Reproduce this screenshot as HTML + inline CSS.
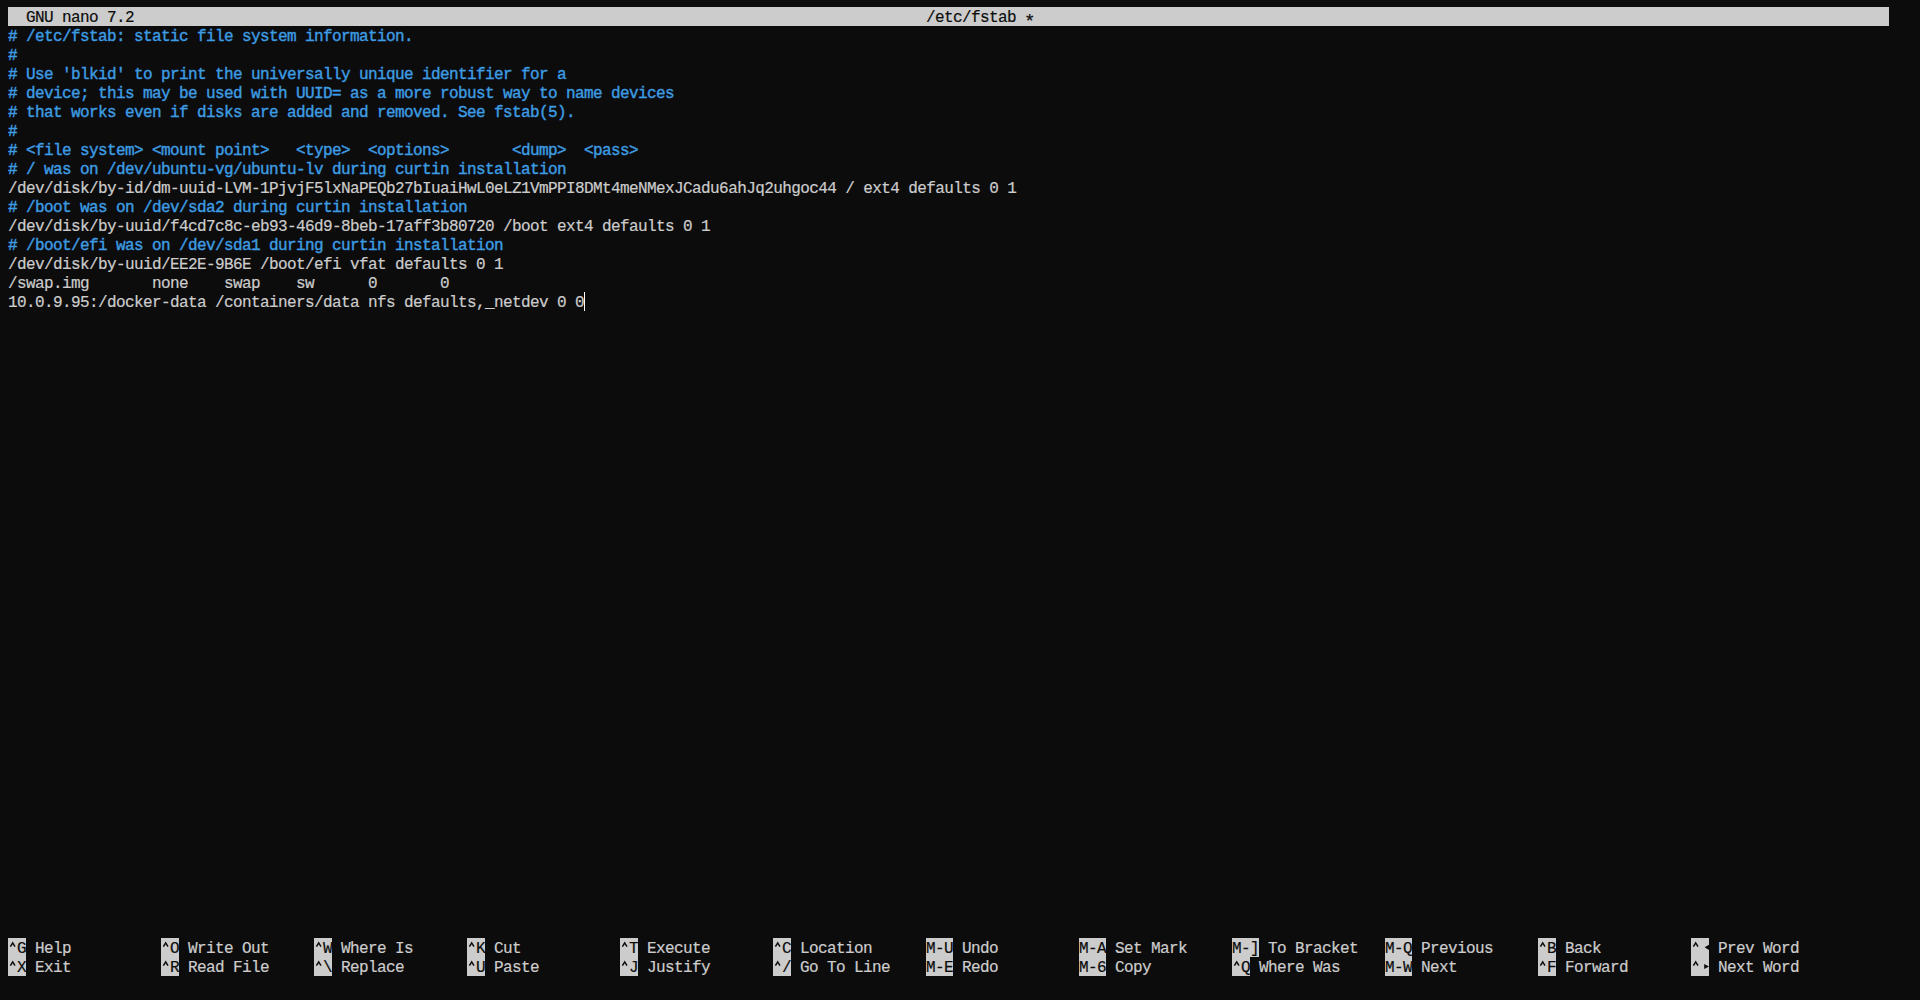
<!DOCTYPE html>
<html><head><meta charset="utf-8">
<style>
html,body{margin:0;padding:0;background:#0c0c0c;width:1920px;height:1000px;overflow:hidden;}
body{position:relative;font-family:"Liberation Mono",monospace;font-size:16px;letter-spacing:-0.6px;color:#cccccc;-webkit-text-stroke:0.2px currentColor;}
.r{position:absolute;left:8px;height:19px;line-height:19px;white-space:pre;padding-top:2px;}
.t{top:0}
.c{color:#3d9ce2;-webkit-text-stroke:0.4px currentColor;}
.bar{position:absolute;left:8px;top:7px;width:1881px;height:19px;background:#cccccc;}
.kb{position:absolute;background:#cccccc;height:19px;}
.kk{color:#0c0c0c;}
.k3{width:27px;}
.ks{position:absolute;white-space:pre;line-height:19px;height:19px;padding-top:2px;}
.cur{position:absolute;left:584px;top:292px;width:1px;height:19px;background:#ffffff;}
</style></head><body>
<div class="bar"></div>
<div class="r" style="top:7px;color:#0c0c0c">  GNU nano 7.2</div>
<div class="r" style="top:7px;left:926px;color:#0c0c0c">/etc/fstab</div>
<div class="r" style="top:11px;left:1024px;color:#0c0c0c;font-size:19px;line-height:19px">*</div>
<div class="r c" style="top:26px"># /etc/fstab: static file system information.</div>
<div class="r c" style="top:45px">#</div>
<div class="r c" style="top:64px"># Use 'blkid' to print the universally unique identifier for a</div>
<div class="r c" style="top:83px"># device; this may be used with UUID= as a more robust way to name devices</div>
<div class="r c" style="top:102px"># that works even if disks are added and removed. See fstab(5).</div>
<div class="r c" style="top:121px">#</div>
<div class="r c" style="top:140px"># &lt;file system&gt; &lt;mount point&gt;   &lt;type&gt;  &lt;options&gt;       &lt;dump&gt;  &lt;pass&gt;</div>
<div class="r c" style="top:159px"># / was on /dev/ubuntu-vg/ubuntu-lv during curtin installation</div>
<div class="r" style="top:178px">/dev/disk/by-id/dm-uuid-LVM-1PjvjF5lxNaPEQb27bIuaiHwL0eLZ1VmPPI8DMt4meNMexJCadu6ahJq2uhgoc44 / ext4 defaults 0 1</div>
<div class="r c" style="top:197px"># /boot was on /dev/sda2 during curtin installation</div>
<div class="r" style="top:216px">/dev/disk/by-uuid/f4cd7c8c-eb93-46d9-8beb-17aff3b80720 /boot ext4 defaults 0 1</div>
<div class="r c" style="top:235px"># /boot/efi was on /dev/sda1 during curtin installation</div>
<div class="r" style="top:254px">/dev/disk/by-uuid/EE2E-9B6E /boot/efi vfat defaults 0 1</div>
<div class="r" style="top:273px">/swap.img       none    swap    sw      0       0</div>
<div class="r" style="top:292px">10.0.9.95:/docker-data /containers/data nfs defaults,_netdev 0 0</div>
<div class="cur"></div>
<!--SHORTCUTS-->
<div class="kb" style="left:8px;top:938px;width:18px"></div>
<div class="ks kk" style="left:17px;top:938px">G</div>
<div class="ks" style="left:35px;top:938px">Help</div>
<div class="kb" style="left:8px;top:957px;width:18px"></div>
<div class="ks kk" style="left:17px;top:957px">X</div>
<div class="ks" style="left:35px;top:957px">Exit</div>
<div class="kb" style="left:161px;top:938px;width:18px"></div>
<div class="ks kk" style="left:170px;top:938px">O</div>
<div class="ks" style="left:188px;top:938px">Write Out</div>
<div class="kb" style="left:161px;top:957px;width:18px"></div>
<div class="ks kk" style="left:170px;top:957px">R</div>
<div class="ks" style="left:188px;top:957px">Read File</div>
<div class="kb" style="left:314px;top:938px;width:18px"></div>
<div class="ks kk" style="left:323px;top:938px">W</div>
<div class="ks" style="left:341px;top:938px">Where Is</div>
<div class="kb" style="left:314px;top:957px;width:18px"></div>
<div class="ks kk" style="left:323px;top:957px">\</div>
<div class="ks" style="left:341px;top:957px">Replace</div>
<div class="kb" style="left:467px;top:938px;width:18px"></div>
<div class="ks kk" style="left:476px;top:938px">K</div>
<div class="ks" style="left:494px;top:938px">Cut</div>
<div class="kb" style="left:467px;top:957px;width:18px"></div>
<div class="ks kk" style="left:476px;top:957px">U</div>
<div class="ks" style="left:494px;top:957px">Paste</div>
<div class="kb" style="left:620px;top:938px;width:18px"></div>
<div class="ks kk" style="left:629px;top:938px">T</div>
<div class="ks" style="left:647px;top:938px">Execute</div>
<div class="kb" style="left:620px;top:957px;width:18px"></div>
<div class="ks kk" style="left:629px;top:957px">J</div>
<div class="ks" style="left:647px;top:957px">Justify</div>
<div class="kb" style="left:773px;top:938px;width:18px"></div>
<div class="ks kk" style="left:782px;top:938px">C</div>
<div class="ks" style="left:800px;top:938px">Location</div>
<div class="kb" style="left:773px;top:957px;width:18px"></div>
<div class="ks kk" style="left:782px;top:957px">/</div>
<div class="ks" style="left:800px;top:957px">Go To Line</div>
<div class="kb" style="left:926px;top:938px;width:27px"></div>
<div class="ks kk" style="left:926px;top:938px">M-U</div>
<div class="ks" style="left:962px;top:938px">Undo</div>
<div class="kb" style="left:926px;top:957px;width:27px"></div>
<div class="ks kk" style="left:926px;top:957px">M-E</div>
<div class="ks" style="left:962px;top:957px">Redo</div>
<div class="kb" style="left:1079px;top:938px;width:27px"></div>
<div class="ks kk" style="left:1079px;top:938px">M-A</div>
<div class="ks" style="left:1115px;top:938px">Set Mark</div>
<div class="kb" style="left:1079px;top:957px;width:27px"></div>
<div class="ks kk" style="left:1079px;top:957px">M-6</div>
<div class="ks" style="left:1115px;top:957px">Copy</div>
<div class="kb" style="left:1232px;top:938px;width:27px"></div>
<div class="ks kk" style="left:1232px;top:938px">M-]</div>
<div class="ks" style="left:1268px;top:938px">To Bracket</div>
<div class="kb" style="left:1232px;top:957px;width:18px"></div>
<div class="ks kk" style="left:1241px;top:957px">Q</div>
<div class="ks" style="left:1259px;top:957px">Where Was</div>
<div class="kb" style="left:1385px;top:938px;width:27px"></div>
<div class="ks kk" style="left:1385px;top:938px">M-Q</div>
<div class="ks" style="left:1421px;top:938px">Previous</div>
<div class="kb" style="left:1385px;top:957px;width:27px"></div>
<div class="ks kk" style="left:1385px;top:957px">M-W</div>
<div class="ks" style="left:1421px;top:957px">Next</div>
<div class="kb" style="left:1538px;top:938px;width:18px"></div>
<div class="ks kk" style="left:1547px;top:938px">B</div>
<div class="ks" style="left:1565px;top:938px">Back</div>
<div class="kb" style="left:1538px;top:957px;width:18px"></div>
<div class="ks kk" style="left:1547px;top:957px">F</div>
<div class="ks" style="left:1565px;top:957px">Forward</div>
<div class="kb" style="left:1691px;top:938px;width:18px"></div>
<div class="ks kk" style="left:1700px;top:938px"></div>
<div class="ks" style="left:1718px;top:938px">Prev Word</div>
<div class="kb" style="left:1691px;top:957px;width:18px"></div>
<div class="ks kk" style="left:1700px;top:957px"></div>
<div class="ks" style="left:1718px;top:957px">Next Word</div>
<!--/SHORTCUTS-->
<svg style="position:absolute;left:0;top:0" width="1920" height="1000"><polygon points="1704.6,947.3 1709,944.8 1709,949.9" fill="#0c0c0c"/><polygon points="1704.2,963.9 1704.2,968.9 1709,966.4" fill="#0c0c0c"/><g fill="none" stroke="#0c0c0c" stroke-width="1.5"><polyline points="10.4,946.7 12.7,942.9 15.0,946.7"/><polyline points="10.4,965.7 12.7,961.9 15.0,965.7"/><polyline points="163.4,946.7 165.7,942.9 168.0,946.7"/><polyline points="163.4,965.7 165.7,961.9 168.0,965.7"/><polyline points="316.4,946.7 318.7,942.9 321.0,946.7"/><polyline points="316.4,965.7 318.7,961.9 321.0,965.7"/><polyline points="469.4,946.7 471.7,942.9 474.0,946.7"/><polyline points="469.4,965.7 471.7,961.9 474.0,965.7"/><polyline points="622.4,946.7 624.7,942.9 627.0,946.7"/><polyline points="622.4,965.7 624.7,961.9 627.0,965.7"/><polyline points="775.4,946.7 777.7,942.9 780.0,946.7"/><polyline points="775.4,965.7 777.7,961.9 780.0,965.7"/><polyline points="1234.4,965.7 1236.7,961.9 1239.0,965.7"/><polyline points="1540.4,946.7 1542.7,942.9 1545.0,946.7"/><polyline points="1540.4,965.7 1542.7,961.9 1545.0,965.7"/><polyline points="1693.4,946.7 1695.7,942.9 1698.0,946.7"/><polyline points="1693.4,965.7 1695.7,961.9 1698.0,965.7"/></g></svg>
</body></html>
